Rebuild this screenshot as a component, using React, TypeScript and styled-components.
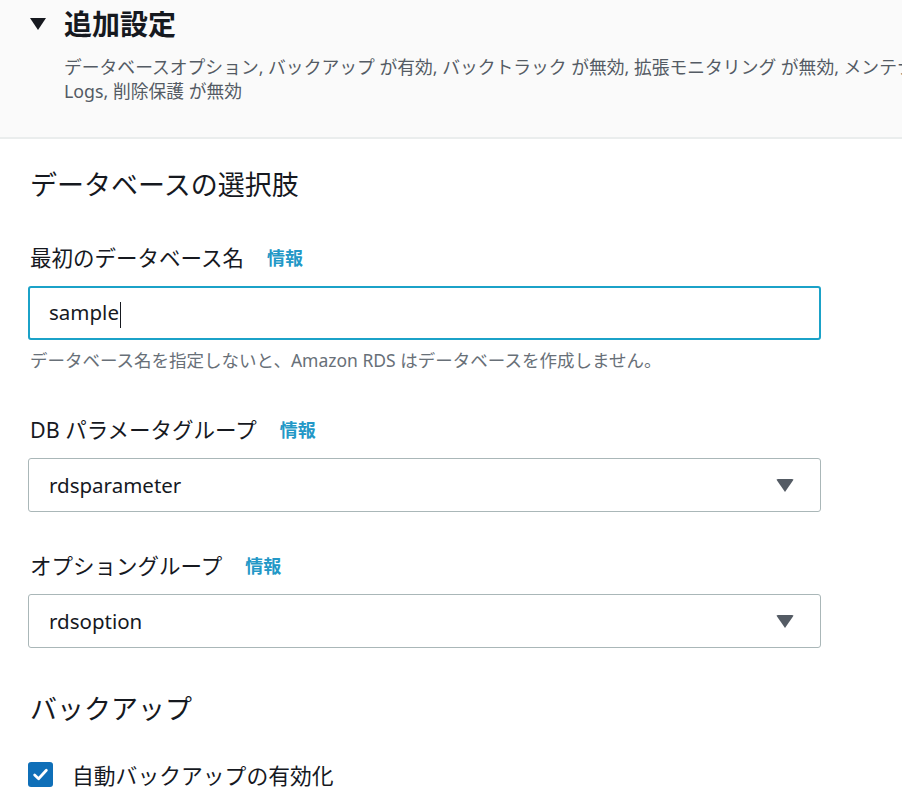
import * as React from 'react';
import styled, { createGlobalStyle } from 'styled-components';

const FONT = `"Noto Sans", "Noto Sans CJK JP", sans-serif`;

const GlobalStyle = createGlobalStyle`
  html, body {
    margin: 0;
    padding: 0;
    background: #ffffff;
    font-family: ${FONT};
    color: #16191f;
  }
`;

const Page = styled.div`
  width: 902px;
  height: 796px;
  overflow: hidden;
`;

const Header = styled.div`
  background-color: #fafafa;
  border-bottom: 2px solid #eaeded;
  height: 139px;
  box-sizing: border-box;
  padding: 5px 0 0 30px;
`;

const HeaderTitle = styled.div`
  display: flex;
  align-items: center;
  gap: 18px;
  height: 36px;
  font-size: 28px;
  font-weight: 700;
  color: #16191f;
`;

const Caret = styled.span`
  width: 0;
  height: 0;
  border-left: 8px solid transparent;
  border-right: 8px solid transparent;
  border-top: 12px solid #16191f;
  margin-top: 2px;
`;

const Summary = styled.div`
  margin: 14px 0 0 34px;
  font-size: 17.8px;
  line-height: 24px;
  color: #545b64;
`;

const SummaryLine = styled.div`
  white-space: nowrap;
`;

const Body = styled.div`
  padding: 26px 0 0 28px;
  width: 793px;
`;

const SectionTitle = styled.h2`
  margin: 0 0 0 2px;
  font-size: 27px;
  font-weight: 400;
  line-height: 40px;
  color: #16191f;
`;

const Field = styled.div<{ $top: number }>`
  margin-top: ${(p) => p.$top}px;
`;

const Label = styled.div`
  display: flex;
  align-items: center;
  gap: 23px;
  margin-left: 2px;
  font-size: 21.5px;
  line-height: 30px;
  color: #16191f;
`;

const Info = styled.span`
  font-size: 18px;
  font-weight: 700;
  color: #2398c7;
`;

const Box = styled.div<{ $focused?: boolean }>`
  margin-top: 13px;
  height: 54px;
  box-sizing: border-box;
  display: flex;
  align-items: center;
  justify-content: space-between;
  padding: 0 26px 0 ${(p) => (p.$focused ? 19 : 20)}px;
  background: #ffffff;
  border: ${(p) => (p.$focused ? '2px solid #1ba2c8' : '1px solid #aab7b8')};
  border-radius: 3px;
  font-size: 20.5px;
  color: #16191f;
`;

const Cursor = styled.span`
  display: inline-block;
  width: 1.5px;
  height: 26px;
  background: #16191f;
  vertical-align: middle;
  margin-left: 1px;
`;

const Arrow = styled.span`
  width: 0;
  height: 0;
  border-left: 9px solid transparent;
  border-right: 9px solid transparent;
  border-top: 13px solid #545b64;
  border-radius: 2px;
`;

const Hint = styled.div`
  margin: 8px 0 0 2px;
  font-size: 17.5px;
  line-height: 24px;
  color: #687078;
`;

const CheckRow = styled.label`
  display: flex;
  align-items: center;
  gap: 19px;
  height: 30px;
  margin-top: 30px;
  font-size: 21.8px;
  color: #16191f;
`;

const CheckBox = styled.span`
  width: 25px;
  height: 25px;
  border-radius: 3px;
  background: #0f6fb8;
  display: flex;
  align-items: center;
  justify-content: center;
`;

export default function App() {
  return (
    <Page>
      <GlobalStyle />
      <Header>
        <HeaderTitle>
          <Caret />
          追加設定
        </HeaderTitle>
        <Summary>
          <SummaryLine>
            データベースオプション, バックアップ が有効, バックトラック が無効, 拡張モニタリング が無効, メンテナンス, CloudWatch
          </SummaryLine>
          <SummaryLine>Logs, 削除保護 が無効</SummaryLine>
        </Summary>
      </Header>
      <Body>
        <SectionTitle>データベースの選択肢</SectionTitle>

        <Field $top={38}>
          <Label>
            最初のデータベース名<Info>情報</Info>
          </Label>
          <Box $focused>
            <span>
              sample
              <Cursor />
            </span>
          </Box>
          <Hint>データベース名を指定しないと、Amazon RDS はデータベースを作成しません。</Hint>
        </Field>

        <Field $top={43}>
          <Label>
            DB パラメータグループ<Info>情報</Info>
          </Label>
          <Box>
            <span>rdsparameter</span>
            <Arrow />
          </Box>
        </Field>

        <Field $top={39}>
          <Label>
            オプショングループ<Info>情報</Info>
          </Label>
          <Box>
            <span>rdsoption</span>
            <Arrow />
          </Box>
        </Field>

        <Field $top={41}>
          <SectionTitle>バックアップ</SectionTitle>
        </Field>

        <CheckRow>
          <CheckBox>
            <svg width="17" height="17" viewBox="0 0 16 16">
              <path d="M2.5 8.5 L6.2 12 L13.5 4" fill="none" stroke="#fff" strokeWidth="2.6" strokeLinecap="round" strokeLinejoin="round" />
            </svg>
          </CheckBox>
          自動バックアップの有効化
        </CheckRow>
      </Body>
    </Page>
  );
}
